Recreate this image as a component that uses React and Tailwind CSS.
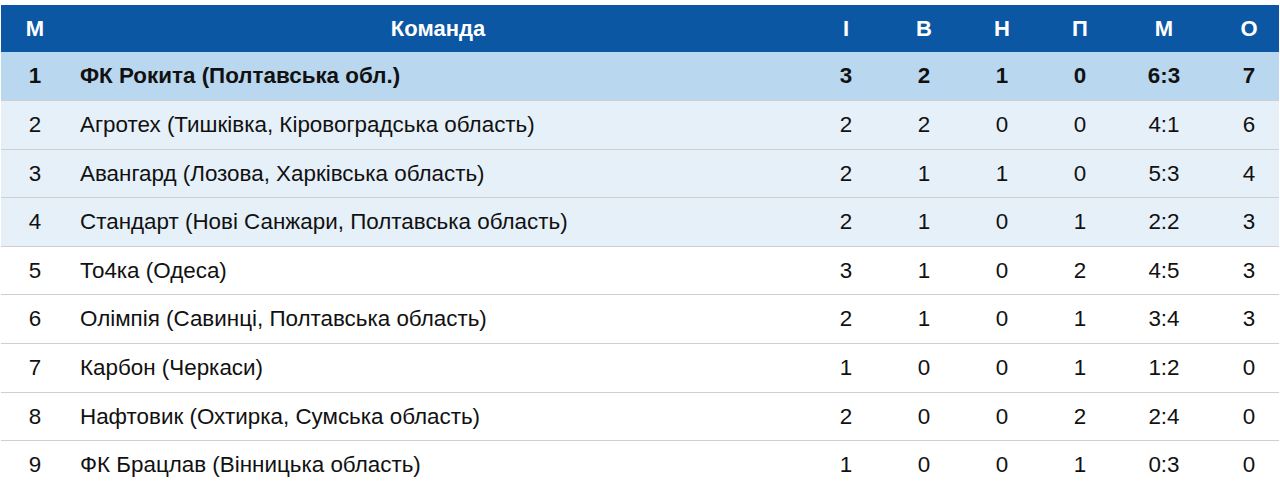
import React from 'react';

// --- Дані таблиці ---
const rows = [
  { pos: 1, team: 'ФК Рокита (Полтавська обл.)', g: 3, w: 2, d: 1, l: 0, goals: '6:3', pts: 7 },
  { pos: 2, team: 'Агротех (Тишківка, Кіровоградська область)', g: 2, w: 2, d: 0, l: 0, goals: '4:1', pts: 6 },
  { pos: 3, team: 'Авангард (Лозова, Харківська область)', g: 2, w: 1, d: 1, l: 0, goals: '5:3', pts: 4 },
  { pos: 4, team: 'Стандарт (Нові Санжари, Полтавська область)', g: 2, w: 1, d: 0, l: 1, goals: '2:2', pts: 3 },
  { pos: 5, team: 'То4ка (Одеса)', g: 3, w: 1, d: 0, l: 2, goals: '4:5', pts: 3 },
  { pos: 6, team: 'Олімпія (Савинці, Полтавська область)', g: 2, w: 1, d: 0, l: 1, goals: '3:4', pts: 3 },
  { pos: 7, team: 'Карбон (Черкаси)', g: 1, w: 0, d: 0, l: 1, goals: '1:2', pts: 0 },
  { pos: 8, team: 'Нафтовик (Охтирка, Сумська область)', g: 2, w: 0, d: 0, l: 2, goals: '2:4', pts: 0 },
  { pos: 9, team: 'ФК Брацлав (Вінницька область)', g: 1, w: 0, d: 0, l: 1, goals: '0:3', pts: 0 },
];

const rowBg = (i) => {
  if (i === 0) return 'bg-[#b9d7ee] font-bold';
  if (i < 4) return 'bg-[#e6f0f9]';
  return 'bg-white';
};

const App = () => {
  return (
    <div className="w-full bg-white pt-[5px] px-[1px] font-['Liberation_Sans',Arial,sans-serif] text-[#111]">
      <table className="w-full border-collapse">
        <colgroup>
          <col className="w-[68px]" />
          <col />
          <col className="w-[78px]" />
          <col className="w-[78px]" />
          <col className="w-[78px]" />
          <col className="w-[78px]" />
          <col className="w-[90px]" />
          <col className="w-[70px]" />
        </colgroup>
        <thead>
          <tr className="bg-[#0b57a4] text-white font-bold text-[22px] h-[47px]">
            <th className="text-center">М</th>
            <th className="text-center">Команда</th>
            <th className="text-center">І</th>
            <th className="text-center">В</th>
            <th className="text-center">Н</th>
            <th className="text-center">П</th>
            <th className="text-center">М</th>
            <th className="text-center pl-[10px]">О</th>
          </tr>
        </thead>
        <tbody className="text-[22.4px]">
          {rows.map((r, i) => (
            <tr key={r.pos} className={`${rowBg(i)} h-[48.6px] border-b border-[#cfcfcf] last:border-b-0`}>
              <td className="text-center">{r.pos}</td>
              <td className="pl-[11px] text-left">{r.team}</td>
              <td className="text-center">{r.g}</td>
              <td className="text-center">{r.w}</td>
              <td className="text-center">{r.d}</td>
              <td className="text-center">{r.l}</td>
              <td className="text-center">{r.goals}</td>
              <td className="text-center pl-[10px]">{r.pts}</td>
            </tr>
          ))}
        </tbody>
      </table>
    </div>
  );
};

export default App;
